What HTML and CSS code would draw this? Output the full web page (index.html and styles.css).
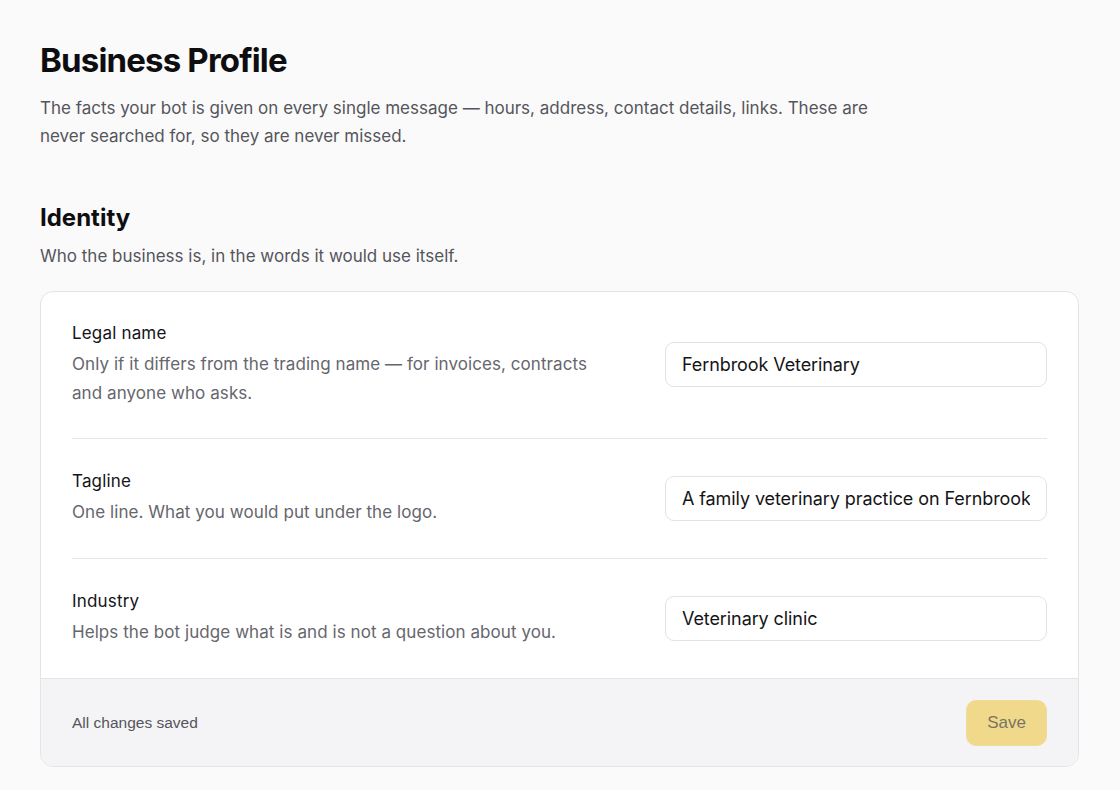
FILE: index.html
```html
<!DOCTYPE html>
<html lang="en">
<head>
<meta charset="utf-8">
<title>Business Profile</title>
<link rel="stylesheet" href="styles.css">
</head>
<body>
<main class="page">
  <header class="page-head">
    <h1 class="title">Business Profile</h1>
    <p class="lead">The facts your bot is given on every single message — hours, address, contact details, links. These are never searched for, so they are never missed.</p>
  </header>

  <section class="section">
    <h2 class="section-title">Identity</h2>
    <p class="section-sub">Who the business is, in the words it would use itself.</p>

    <div class="card">
      <div class="rows">
        <div class="row">
          <div class="row-text">
            <div class="label">Legal name</div>
            <div class="desc">Only if it differs from the trading name — for invoices, contracts and anyone who asks.</div>
          </div>
          <input class="field" type="text" value="Fernbrook Veterinary">
        </div>
        <div class="row">
          <div class="row-text">
            <div class="label">Tagline</div>
            <div class="desc">One line. What you would put under the logo.</div>
          </div>
          <input class="field" type="text" value="A family veterinary practice on Fernbrook Road since 1998">
        </div>
        <div class="row">
          <div class="row-text">
            <div class="label">Industry</div>
            <div class="desc">Helps the bot judge what is and is not a question about you.</div>
          </div>
          <input class="field" type="text" value="Veterinary clinic">
        </div>
      </div>
      <div class="card-foot">
        <span class="status">All changes saved</span>
        <button class="save" type="button" disabled>Save</button>
      </div>
    </div>
  </section>
</main>
</body>
</html>
```

FILE: styles.css
```css
* { box-sizing: border-box; }

html, body {
  margin: 0;
  padding: 0;
  background: #fafafa;
}

body {
  font-family: Inter, "Noto Sans", sans-serif;
  color: #111114;
}

.page {
  padding: 40px 41px 24px 40px;
}

.title {
  margin: 0;
  font-size: 33px;
  line-height: 40px;
  font-weight: 700;
  letter-spacing: -0.025em;
  color: #0e0e10;
}

.lead {
  margin: 14px 0 0;
  max-width: 840px;
  font-size: 17px;
  line-height: 28px;
  color: #55555c;
  letter-spacing: 0;
}

.section {
  margin-top: 53px;
}

.section-title {
  margin: 0;
  font-size: 24px;
  line-height: 30px;
  font-weight: 700;
  letter-spacing: 0;
  color: #0e0e10;
}

.section-sub {
  margin: 9px 0 0;
  font-size: 17px;
  line-height: 28px;
  color: #55555c;
  letter-spacing: 0;
}

.card {
  margin-top: 21px;
  background: #ffffff;
  border: 1px solid #e4e4e8;
  border-radius: 13px;
  overflow: hidden;
}

.rows {
  padding: 0 31px;
}

.row {
  display: flex;
  align-items: center;
  gap: 40px;
  min-height: 120px;
  padding: 29px 0 30px;
  border-bottom: 1px solid #e6e6e9;
}

.row:last-child {
  border-bottom: none;
  min-height: 119px;
}

.row-text {
  flex: 1;
  min-width: 0;
  max-width: 530px;
  margin-right: auto;
}

.label {
  font-size: 17px;
  line-height: 24px;
  color: #141417;
  letter-spacing: 0.01em;
}

.desc {
  margin-top: 5px;
  font-size: 17px;
  line-height: 29px;
  color: #66666d;
  letter-spacing: 0.004em;
}

.field {
  flex: none;
  width: 382px;
  height: 45px;
  padding: 0 16px;
  border: 1px solid #e2e2e6;
  border-radius: 9px;
  background: #ffffff;
  font-family: Inter, "Noto Sans", sans-serif;
  font-size: 18px;
  letter-spacing: -0.005em;
  color: #141417;
  outline: none;
}

.card-foot {
  display: flex;
  align-items: center;
  justify-content: space-between;
  padding: 21px 31px 20px 31px;
  background: #f4f4f6;
  border-top: 1px solid #e4e4e8;
}

.status {
  font-family: "Liberation Sans", Arial, sans-serif;
  font-size: 15.5px;
  color: #55555c;
}

.save {
  width: 81px;
  height: 46px;
  border: 1px solid #efdc9a;
  border-radius: 10px;
  background: #f1d98c;
  font-family: "Liberation Sans", Arial, sans-serif;
  font-size: 17px;
  color: #7a7466;
  cursor: default;
}
```
